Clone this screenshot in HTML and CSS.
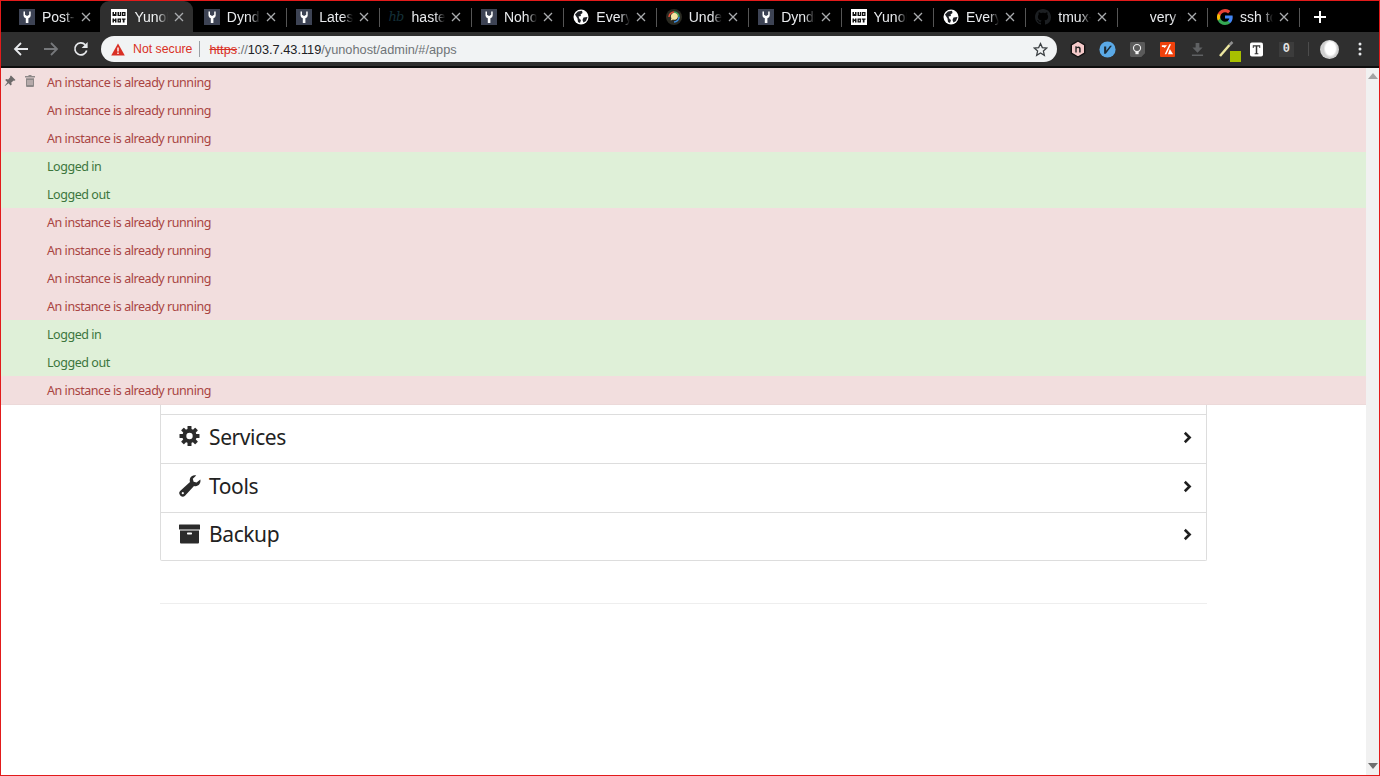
FILE: index.html
```html
<!DOCTYPE html>
<html lang="en">
<head>
<meta charset="utf-8">
<title>YunoHost admin</title>
<link rel="stylesheet" href="styles.css">
</head>
<body>
<svg class="defs" width="0" height="0" aria-hidden="true">
  <symbol id="fav-y" viewBox="0 0 16 16">
    <rect width="16" height="16" fill="#3d4354"/>
    <path d="M4.500 2.500 L4.500 6.500 Q4.500 8.500 6.800 9.200 L6.800 14 L9.400 14 L9.400 9.200 Q11.700 8.500 11.700 6.500 L11.700 2.500 L10.200 2.500 L10.200 5.800 L8.100 7 L6 5.800 L6 2.500 Z" fill="#fff"/>
  </symbol>
  <symbol id="fav-yuno" viewBox="0 0 16 16">
    <rect width="16" height="16" fill="#fff"/>
    <path d="M1.500 3h1.500v2h1V3h1.500v4h-4zM6.500 3H8v3h.8V3h1.500v4H6.500zM11 3h3.500v4H11zM1.500 9.500h1.500v1h1v-1h1.500v4H4v-1.500H3v1.500H1.500zM6.500 9.500h3.500v4H6.500zM10.800 9.500h3.700v1.300h-1v2.700h-1.700v-2.700h-1z" fill="#111"/>
    <path d="M12.300 4h.9v2h-.9zM7.800 10.700h.9v1.600h-.9z" fill="#fff"/>
  </symbol>
  <symbol id="fav-globe" viewBox="0 0 16 16">
    <circle cx="8" cy="8" r="7.500" fill="#fff"/>
    <path d="M2 5.500 L5 2.500 L9 1.800 L9.500 4 L7.500 5.500 L8 7 L5.500 7.500 L6.500 10 L8 11 L7 14 L5 13 L4.500 9.500 Z M10.500 8.500 L14.500 8 L13 12 L10.500 13.500 L9.500 11 Z" fill="#1d1f24"/>
  </symbol>
  <symbol id="fav-bubble" viewBox="0 0 16 16">
    <circle cx="8" cy="8" r="8" fill="#2a2a22"/>
    <path d="M3 8a5 5 0 0 1 5-5" stroke="#e0503a" stroke-width="1.500" fill="none"/>
    <path d="M8 3a5 5 0 0 1 5 5" stroke="#3fa35c" stroke-width="1.500" fill="none"/>
    <path d="M13 8a5 5 0 0 1-5 5" stroke="#3d8ee0" stroke-width="1.500" fill="none"/>
    <path d="M5 6.500a3.500 3.500 0 1 1 2 4l-2.200 1 .6-2.200a3.500 3.500 0 0 1-.4-2.800z" fill="#f4e3a0"/>
  </symbol>
  <symbol id="fav-gh" viewBox="0 0 16 16">
    <path fill="#1c1f22" d="M8 0C3.580 0 0 3.580 0 8c0 3.540 2.290 6.530 5.470 7.590.4.070.55-.17.55-.38 0-.19-.01-.82-.01-1.490-2.010.37-2.530-.49-2.690-.94-.09-.23-.48-.94-.82-1.130-.28-.15-.68-.52-.01-.53.630-.01 1.080.58 1.230.82.720 1.210 1.870.87 2.330.66.070-.52.280-.87.510-1.070-1.780-.2-3.640-.89-3.640-3.950 0-.87.310-1.590.82-2.150-.08-.2-.36-1.020.08-2.120 0 0 .67-.21 2.200.82.640-.18 1.320-.27 2-.27s1.360.09 2 .27c1.530-1.040 2.200-.82 2.200-.82.440 1.100.16 1.920.08 2.120.51.560.82 1.270.82 2.150 0 3.070-1.870 3.750-3.650 3.950.29.250.54.730.54 1.480 0 1.070-.01 1.930-.01 2.200 0 .21.150.46.550.38A8.010 8.010 0 0 0 16 8c0-4.420-3.580-8-8-8z"/>
  </symbol>
  <symbol id="fav-g" viewBox="0 0 16 16">
    <path fill="#4285f4" d="M15.700 8.200c0-.6-.05-1.100-.15-1.600H8v3h4.350c-.2 1-.75 1.800-1.600 2.400v2h2.550c1.500-1.400 2.400-3.400 2.400-5.800z"/>
    <path fill="#34a853" d="M8 16c2.150 0 3.950-.7 5.300-1.950L10.750 12c-.7.500-1.650.8-2.750.8-2.100 0-3.900-1.400-4.550-3.300H.85v2.050A8 8 0 0 0 8 16z"/>
    <path fill="#fbbc05" d="M3.450 9.500a4.800 4.800 0 0 1 0-3V4.450H.85a8 8 0 0 0 0 7.100z"/>
    <path fill="#ea4335" d="M8 3.200c1.200 0 2.250.4 3.100 1.200l2.300-2.300A8 8 0 0 0 .85 4.450L3.450 6.500C4.100 4.600 5.900 3.200 8 3.200z"/>
  </symbol>
  <symbol id="close" viewBox="0 0 10 10">
    <path d="M1 1l8 8M9 1L1 9" stroke="#a9abae" stroke-width="1.300" fill="none"/>
  </symbol>
  <symbol id="cog" viewBox="0 0 20 20">
    <g fill="#2b2b2b">
      <rect x="8" y="0" width="4" height="20" rx=".6"/>
      <rect x="8" y="0" width="4" height="20" rx=".6" transform="rotate(45 10 10)"/>
      <rect x="8" y="0" width="4" height="20" rx=".6" transform="rotate(90 10 10)"/>
      <rect x="8" y="0" width="4" height="20" rx=".6" transform="rotate(135 10 10)"/>
    </g>
    <circle cx="10" cy="10" r="5.200" fill="none" stroke="#2b2b2b" stroke-width="4"/>
    <circle cx="10" cy="10" r="3.200" fill="#fff"/>
  </symbol>
  <symbol id="wrench" viewBox="0 0 22 22">
    <path fill="#2b2b2b" d="M21.300 4.600c.4 1.500.2 3.100-.8 4.500-1.300 1.800-3.500 2.500-5.500 1.800L6 20.700c-1.200 1.300-3 1.300-4.200.2l-.7-.7c-1.200-1.200-1.200-3 0-4.200l9.900-9C10.300 4.800 10.900 2.600 12.700 1.200c1.300-1 3-1.300 4.500-.8l-3.400 3.400.8 3 3 .8z"/>
    <circle cx="3.800" cy="18.200" r="1.100" fill="#fff"/>
  </symbol>
  <symbol id="archive" viewBox="0 0 21 19">
    <rect x="0" y="0" width="21" height="5" rx=".5" fill="#2b2b2b"/>
    <path d="M1 6h19v12a1 1 0 0 1-1 1H2a1 1 0 0 1-1-1z" fill="#2b2b2b"/>
    <rect x="8" y="8" width="5" height="2" rx=".7" fill="#fff"/>
  </symbol>
  <symbol id="chev" viewBox="0 0 9 13">
    <path d="M1.800 1.800 L6.600 6.500 L1.800 11.200" stroke="#1f1f1f" stroke-width="2.600" fill="none"/>
  </symbol>
</svg>

<div class="window">
  <div class="tabstrip">
    <div class="tab"><svg class="fav"><use href="#fav-y"/></svg><span class="title">Post-</span><svg class="x"><use href="#close"/></svg></div>
    <div class="tab active"><svg class="fav"><use href="#fav-yuno"/></svg><span class="title">YunoHost</span><svg class="x"><use href="#close"/></svg></div>
    <div class="tab"><svg class="fav"><use href="#fav-y"/></svg><span class="title">Dyndns</span><svg class="x"><use href="#close"/></svg></div>
    <div class="tab sep"><svg class="fav"><use href="#fav-y"/></svg><span class="title">Latest</span><svg class="x"><use href="#close"/></svg></div>
    <div class="tab sep"><span class="fav hb">hb</span><span class="title">haste</span><svg class="x"><use href="#close"/></svg></div>
    <div class="tab sep"><svg class="fav"><use href="#fav-y"/></svg><span class="title">Nohost</span><svg class="x"><use href="#close"/></svg></div>
    <div class="tab sep"><svg class="fav"><use href="#fav-globe"/></svg><span class="title">Everyone</span><svg class="x"><use href="#close"/></svg></div>
    <div class="tab sep"><svg class="fav"><use href="#fav-bubble"/></svg><span class="title">Understand</span><svg class="x"><use href="#close"/></svg></div>
    <div class="tab sep"><svg class="fav"><use href="#fav-y"/></svg><span class="title">Dyndns</span><svg class="x"><use href="#close"/></svg></div>
    <div class="tab sep"><svg class="fav"><use href="#fav-yuno"/></svg><span class="title">YunoHost</span><svg class="x"><use href="#close"/></svg></div>
    <div class="tab sep"><svg class="fav"><use href="#fav-globe"/></svg><span class="title">Everyone</span><svg class="x"><use href="#close"/></svg></div>
    <div class="tab sep tab-a"><svg class="fav"><use href="#fav-gh"/></svg><span class="title">tmux-</span><svg class="x"><use href="#close"/></svg></div>
    <div class="tab sep tab-b"><span class="fav"></span><span class="title">very old</span><svg class="x"><use href="#close"/></svg></div>
    <div class="tab sep"><svg class="fav"><use href="#fav-g"/></svg><span class="title">ssh to</span><svg class="x"><use href="#close"/></svg></div>
    <div class="newtab sep">
      <svg width="14" height="14" viewBox="0 0 14 14"><path d="M7 1v12M1 7h12" stroke="#fff" stroke-width="2"/></svg>
    </div>
  </div>

  <div class="toolbar">
    <div class="nav">
      <svg width="16" height="16" viewBox="0 0 16 16"><path d="M15 8H2M8 2L2 8l6 6" stroke="#e8eaed" stroke-width="1.800" fill="none"/></svg>
      <svg width="16" height="16" viewBox="0 0 16 16"><path d="M1 8h13M8 2l6 6-6 6" stroke="#76787b" stroke-width="1.800" fill="none"/></svg>
      <svg width="16" height="16" viewBox="0 0 16 16"><path d="M13.700 9.500A6 6 0 1 1 12.300 3.800" stroke="#e8eaed" stroke-width="1.700" fill="none"/><path d="M14.600 1v6h-6z" fill="#e8eaed"/></svg>
    </div>
    <div class="omnibox">
      <svg class="warn" width="14" height="13" viewBox="0 0 14 13"><path d="M7 .5L13.800 12.500H.2z" fill="#d93025"/><path d="M6.300 4.500h1.400v4H6.300zM6.300 9.500h1.400v1.400H6.300z" fill="#fff"/></svg>
      <span class="insecure">Not secure</span>
      <span class="omni-sep"></span>
      <span class="url"><s class="scheme">https</s><span class="dim">://</span>103.7.43.119<span class="dim">/yunohost/admin/#/apps</span></span>
      <svg class="star" width="15" height="15" viewBox="0 0 24 24"><path d="M12 2.500l2.900 6.500 7.100.7-5.400 4.700 1.600 7-6.200-3.700-6.200 3.700 1.600-7L2 9.700 9.100 9z" fill="none" stroke="#3c4043" stroke-width="2"/></svg>
    </div>
    <div class="exts">
      <span class="ext"><svg width="16" height="18" viewBox="0 0 18 20"><path d="M9 1l7.500 4.300v9.400L9 19l-7.500-4.300V5.300z" fill="#f4c9c9" stroke="#111" stroke-width="1.500"/><path d="M6 14V7h1.500v1c1.500-1.500 4.500-1 4.500 1.500V14h-1.700V10c0-1.500-2.800-1.500-2.800 0v4z" fill="#222"/></svg></span>
      <span class="ext"><svg width="17" height="17" viewBox="0 0 20 20"><circle cx="10" cy="10" r="9.500" fill="#5aa9e6"/><path d="M6 6.500h2.500v5L13 5.500h2.200L8 15H6z" fill="#1e2a33"/></svg></span>
      <span class="ext"><svg width="15" height="15" viewBox="0 0 16 16"><path d="M0 1.500A1.500 1.500 0 0 1 1.500 0h13A1.500 1.500 0 0 1 16 1.500V12l-4 4H1.500A1.500 1.500 0 0 1 0 14.500z" fill="#5a5a5a"/><circle cx="7.500" cy="6.500" r="3.800" fill="none" stroke="#f2f2f2" stroke-width="1.200"/><path d="M5.800 10.500h3.400v2.500H5.800z" fill="#f2f2f2"/></svg></span>
      <span class="ext"><svg width="15" height="15" viewBox="0 0 16 16"><rect width="16" height="16" rx="1" fill="#f0410c"/><path d="M2 3.500h5.500L5 6.500 3.800 5.200H2zM10 2.500L5 13h1.800L11.800 2.500zM10.500 7.500l3.500 5.500H8.500z" fill="#fff"/></svg></span>
      <span class="ext"><svg width="13" height="14" viewBox="0 0 14 15"><path d="M5 1h4v5h3.500L7 11.500 1.500 6H5zM1 13.500h12V15H1z" fill="#5f6163"/></svg></span>
      <span class="ext">
        <svg width="16" height="16" viewBox="0 0 16 16"><path d="M1 15L10.500 4" stroke="#ece7a0" stroke-width="2.500"/><path d="M10.500 4L13.500 1" stroke="#8f8f8f" stroke-width="2.500"/></svg>
        <span class="badge"></span>
      </span>
      <span class="ext"><svg width="13" height="15" viewBox="0 0 14 15"><rect width="14" height="15" rx="2" fill="#fff"/><path d="M3 3h8v2.800h-1V4.200H7.800v7.300H9v1H5v-1h1.200V4.200H4v1.600H3z" fill="#333"/></svg></span>
      <span class="ext"><span class="counter">0</span></span>
      <span class="ext-sep"></span>
      <span class="avatar"></span>
      <svg class="dots" width="4" height="14" viewBox="0 0 4 14"><circle cx="2" cy="2" r="1.500" fill="#e8eaed"/><circle cx="2" cy="7" r="1.500" fill="#e8eaed"/><circle cx="2" cy="12" r="1.500" fill="#e8eaed"/></svg>
    </div>
  </div>
  <div class="toolbar-edge"></div>

  <div class="viewport">
    <div class="page">
      <main class="content">
        <nav class="menu">
          <a class="item"><svg class="item-icon"><use href="#cog"/></svg><span class="label">Applications</span><svg class="chev"><use href="#chev"/></svg></a>
          <a class="item"><svg class="item-icon"><use href="#cog"/></svg><span class="label">Services</span><svg class="chev"><use href="#chev"/></svg></a>
          <a class="item"><svg class="item-icon tool"><use href="#wrench"/></svg><span class="label">Tools</span><svg class="chev"><use href="#chev"/></svg></a>
          <a class="item"><svg class="item-icon box"><use href="#archive"/></svg><span class="label">Backup</span><svg class="chev"><use href="#chev"/></svg></a>
        </nav>
        <hr class="rule">
      </main>
      <section class="log">
        <div class="log-tools">
          <svg width="12" height="12" viewBox="0 0 12 12"><path d="M7 .5l4.500 4.500-1 .8-.8-.4L7.300 7.500l.4 2-1 1-2.200-2.200L1 11l-.3-.3 2.700-3.500L1.200 5l1-1 2 .4 2.100-2.400-.3-.7z" fill="#6d6a6a"/></svg>
          <svg width="10" height="12" viewBox="0 0 10 12"><path d="M3.500 1V0h3v1H10v1.500H0V1zM1 3.200h8V11a1 1 0 0 1-1 1H2a1 1 0 0 1-1-1z" fill="#8d8888"/><path d="M3 5v5M5 5v5M7 5v5" stroke="#f2dede" stroke-width=".8"/></svg>
        </div>
        <p class="msg err">An instance is already running</p>
        <p class="msg err">An instance is already running</p>
        <p class="msg err">An instance is already running</p>
        <p class="msg ok">Logged in</p>
        <p class="msg ok">Logged out</p>
        <p class="msg err">An instance is already running</p>
        <p class="msg err">An instance is already running</p>
        <p class="msg err">An instance is already running</p>
        <p class="msg err">An instance is already running</p>
        <p class="msg ok">Logged in</p>
        <p class="msg ok">Logged out</p>
        <p class="msg err">An instance is already running</p>
      </section>
    </div>
    <div class="scrollbar">
      <svg width="10" height="6" viewBox="0 0 10 6"><path d="M5 0l5 6H0z" fill="#a3a3a3"/></svg>
      <svg width="10" height="6" viewBox="0 0 10 6"><path d="M5 6L0 0h10z" fill="#6f6f6f"/></svg>
    </div>
  </div>
</div>
</body>
</html>
```

FILE: styles.css
```css
* { box-sizing: border-box; }
html, body { margin: 0; height: 100%; overflow: hidden; }
body { font-family: "Liberation Sans", Arial, sans-serif; background: #fff; }
.defs { position: absolute; }

.window {
  height: 776px;
  display: flex;
  flex-direction: column;
  border: 1px solid #e21b1b;
}

.tabstrip {
  height: 31px;
  background: #000;
  display: flex;
  align-items: stretch;
  padding-left: 7px;
  flex: none;
}
.tab {
  width: 92.4px;
  padding: 0 8px 0 11px;
  display: flex;
  align-items: center;
  position: relative;
  flex: none;
  color: #e8eaed;
  font-size: 14px;
  border-radius: 9px 9px 0 0;
}
.tab-a { width: 91.4px; }
.tab-b { width: 90.4px; }
.tab.active { background: #2f2f2f; color: #f1f3f4; }
.sep::before {
  content: "";
  position: absolute;
  left: 1px;
  top: 7px;
  height: 19px;
  width: 1px;
  background: #555;
}
.fav { width: 16px; height: 16px; flex: none; margin-right: 7px; display: block; }
.hb {
  font: italic 13px/16px "DejaVu Serif", serif;
  color: #143038;
  letter-spacing: -1px;
}
.title {
  flex: 1;
  min-width: 0;
  white-space: nowrap;
  overflow: hidden;
  -webkit-mask-image: linear-gradient(90deg, #000 70%, transparent 100%);
  mask-image: linear-gradient(90deg, #000 70%, transparent 100%);
}
.x { width: 10px; height: 10px; flex: none; margin-left: 6px; margin-right: 1px; }
.newtab {
  width: 43px;
  position: relative;
  display: flex;
  align-items: center;
  justify-content: center;
}

.toolbar {
  height: 34px;
  flex: none;
  background: #2f2f2f;
  display: flex;
  align-items: center;
}
.toolbar-edge { height: 2px; flex: none; background: #0e0e0e; }
.nav {
  width: 100px;
  display: flex;
  align-items: center;
  justify-content: space-between;
  padding: 0 12px 0 12px;
  flex: none;
}
.omnibox {
  width: 956px;
  height: 26px;
  border-radius: 13px;
  background: #f1f3f4;
  display: flex;
  align-items: center;
  padding: 0 9px 0 10px;
  flex: none;
}
.warn { flex: none; margin-right: 8px; }
.insecure { color: #d93025; font-size: 12.3px; }
.omni-sep { width: 1px; height: 16px; background: #9aa0a6; margin: 0 9px 0 7px; }
.url { flex: 1; color: #202124; white-space: nowrap; font-size: 12.75px; }
.scheme { color: #d93025; }
.dim { color: #6f7377; }
.star { flex: none; }
.exts { flex: 1; display: flex; align-items: center; padding-left: 6px; }
.ext {
  width: 29.8px;
  height: 24px;
  position: relative;
  display: flex;
  align-items: center;
  justify-content: center;
  flex: none;
}
.badge {
  position: absolute;
  right: 1px;
  bottom: -1px;
  width: 11px;
  height: 11px;
  background: #a8c000;
}
.counter {
  width: 15px;
  height: 15px;
  background: radial-gradient(circle, #6a6a6a 45%, #3c3c3c 46%) 0 0 / 2px 2px;
  color: #e4e4e4;
  font: bold 12px/15px "Liberation Mono", monospace;
  text-align: center;
  display: block;
}
.ext-sep { width: 1px; height: 14px; background: #4c4c4c; margin: 0 11px 0 7px; }
.avatar {
  width: 19px;
  height: 19px;
  border-radius: 50%;
  background: radial-gradient(ellipse 7px 9px at 55% 45%, #fff 70%, #cfcfcf 100%);
  flex: none;
}
.dots { flex: none; margin-left: 19px; }

.viewport { flex: 1; min-height: 0; display: flex; }
.page { flex: 1; min-width: 0; position: relative; overflow: hidden; }
.scrollbar {
  width: 13px;
  flex: none;
  background: #f1f1f1;
  display: flex;
  flex-direction: column;
  justify-content: space-between;
  align-items: center;
  padding: 5px 0 6px;
}

.content { padding: 297px 159px 0; }
.menu { border: 1px solid #ddd; border-top: 0; border-radius: 0 0 2px 2px; }
.item {
  height: 49px;
  padding: 0 14px 4px 18px;
  display: flex;
  align-items: center;
  border-top: 1px solid #ddd;
  color: #222;
}
.item:first-child { border-top: 0; }
.item:last-child { height: 48px; }
.item-icon { width: 21px; height: 20px; flex: none; margin: -2px 9px 0 0; }
.item-icon.tool { width: 22px; height: 22px; margin: 0 8px 0 0; }
.label {
  flex: 1;
  font: 21px/1 "Noto Sans", sans-serif;
  letter-spacing: -.4px;
  color: #222;
}
.chev { width: 9px; height: 13px; flex: none; }
.rule { margin: 42px 0 0; border: 0; border-top: 1px solid #eee; }

.log { position: absolute; top: 0; left: 0; right: 0; border-bottom: 1px solid #ecd9d9; }
.log-tools {
  position: absolute;
  top: 7px;
  left: 3px;
  display: flex;
  gap: 9px;
  align-items: center;
}
.msg {
  margin: 0;
  height: 28px;
  padding-left: 46px;
  font: 12.500px/30px "Noto Sans", sans-serif;
  letter-spacing: -.45px;
}
.err { background: #f2dede; color: #a94442; }
.ok { background: #dff0d8; color: #3c763d; }
```
